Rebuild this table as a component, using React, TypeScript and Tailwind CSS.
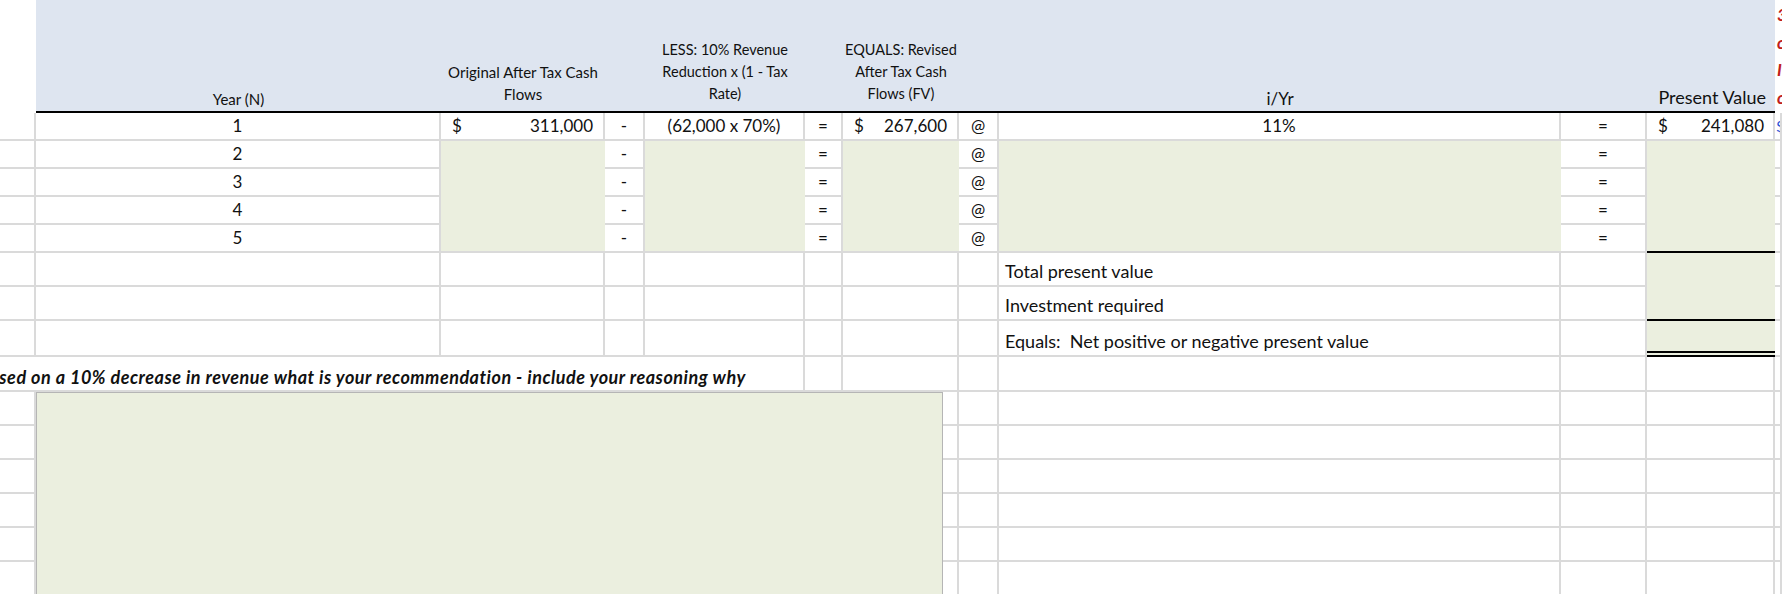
import React from 'react';

// spreadsheet gridline + fills
const gl = 'border-r-2 border-b-2 border-[#dadada]';
const head = 'bg-[#dee5f0] border-b-2 border-black';
const fill = 'bg-[#ebefdf]';
const fillLast = 'bg-[#ebefdf] border-b-2 border-[#dadada]';

const rows = [2, 3, 4, 5];

const App: React.FC = () => {
  return (
    <div className="w-[1782px] h-[594px] overflow-hidden bg-white text-[#111] font-[Lato,sans-serif]">
      <div className="grid grid-cols-[36px_405px_164px_40px_160px_38px_116px_40px_562px_86px_128px_7px] grid-rows-[113px_28px_28px_28px_28px_28px_34px_34px_36px_35px_34px_34px_34px_34px_34px_34px] whitespace-nowrap">
        {/* header */}
        <div />
        <div className={`${head} flex items-end justify-center pb-[1px] text-[15px] leading-[22px]`}>Year (N)</div>
        <div className={`${head} flex flex-col items-center justify-end pb-[6px] text-[15px] leading-[22px]`}>
          <span>Original After Tax Cash</span>
          <span>Flows</span>
        </div>
        <div className={head} />
        <div className={`${head} flex flex-col items-center justify-end pb-[6px] text-[14.5px] leading-[22px]`}>
          <span>LESS: 10% Revenue</span>
          <span>Reduction x (1 - Tax</span>
          <span>Rate)</span>
        </div>
        <div className={head} />
        <div className={`${head} flex flex-col items-center justify-end pb-[6px] text-[14.5px] leading-[22px]`}>
          <span>EQUALS: Revised</span>
          <span>After Tax Cash</span>
          <span>Flows (FV)</span>
        </div>
        <div className={head} />
        <div className={`${head} flex items-end justify-center pb-[1px] text-[17px] leading-[22px]`}>i/Yr</div>
        <div className={head} />
        <div className={`${head} flex items-end justify-end pr-[9px] pb-[3px] text-[18px] leading-[22px]`}>Present Value</div>
        <div className="flex flex-col overflow-hidden pl-[2px] pt-[1px] text-[17px] leading-[27.5px] font-bold italic text-[#c0201a]">
          <span>3.</span>
          <span>c</span>
          <span>I</span>
          <span>c</span>
        </div>

        {/* year 1 */}
        <div className={gl} />
        <div className={`${gl} flex items-center justify-center text-[17px]`}>1</div>
        <div className={`${gl} flex items-center justify-between pl-[11px] pr-[10px] text-[17px]`}>
          <span>$</span>
          <span>311,000</span>
        </div>
        <div className={`${gl} flex items-center justify-center text-[17px]`}>-</div>
        <div className={`${gl} flex items-center justify-center text-[17px]`}>(62,000 x 70%)</div>
        <div className={`${gl} flex items-center justify-center text-[17px]`}>=</div>
        <div className={`${gl} flex items-center justify-between pl-[11px] pr-[10px] text-[17px]`}>
          <span>$</span>
          <span>267,600</span>
        </div>
        <div className={`${gl} flex items-center justify-center text-[17px]`}>@</div>
        <div className={`${gl} flex items-center justify-center text-[17px]`}>11%</div>
        <div className={`${gl} flex items-center justify-center text-[17px]`}>=</div>
        <div className={`${gl} flex items-center justify-between pl-[11px] pr-[9px] text-[17px]`}>
          <span>$</span>
          <span>241,080</span>
        </div>
        <div className={`${gl} flex items-center overflow-hidden pl-[1px] text-[16px] text-[#2a4fd6]`}>$</div>

        {/* years 2-5 */}
        {rows.map((n) => (
          <React.Fragment key={n}>
            <div className={gl} />
            <div className={`${gl} flex items-center justify-center text-[17px]`}>{n}</div>
            <div className={n === 5 ? fillLast : fill} />
            <div className={`${gl} flex items-center justify-center text-[17px]`}>-</div>
            <div className={n === 5 ? fillLast : fill} />
            <div className={`${gl} flex items-center justify-center text-[17px]`}>=</div>
            <div className={n === 5 ? fillLast : fill} />
            <div className={`${gl} flex items-center justify-center text-[17px]`}>@</div>
            <div className={n === 5 ? fillLast : fill} />
            <div className={`${gl} flex items-center justify-center text-[17px]`}>=</div>
            <div className={n === 5 ? 'bg-[#ebefdf] border-b-2 border-black' : fill} />
            <div className={gl} />
          </React.Fragment>
        ))}

        {/* totals */}
        {['Total present value', 'Investment required', 'Equals:  Net positive or negative present value'].map((label, i) => (
          <React.Fragment key={label}>
            <div className={gl} />
            <div className={gl} />
            <div className={gl} />
            <div className={gl} />
            <div className={gl} />
            <div className={gl} />
            <div className={gl} />
            <div className={gl} />
            <div className={`${gl} flex items-end pl-[6px] pb-[4px] text-[18px] leading-[20px] whitespace-pre`}>{label}</div>
            <div className={gl} />
            <div
              className={
                i === 0
                  ? 'bg-[#ebefdf]'
                  : i === 1
                  ? 'bg-[#ebefdf] border-b-2 border-black'
                  : 'bg-[#ebefdf] border-b-[6px] border-double border-black'
              }
            />
            <div className={gl} />
          </React.Fragment>
        ))}

        {/* question row */}
        <div className={`${gl} col-span-5 flex items-end pb-[3px] overflow-hidden`}>
          <span className="ml-[-22px] text-[18px] leading-[20px] tracking-[0.5px] font-bold italic">
            Based on a 10% decrease in revenue what is your recommendation - include your reasoning why
          </span>
        </div>
        <div className={gl} />
        <div className={gl} />
        <div className={gl} />
        <div className={gl} />
        <div className={gl} />
        <div className={gl} />
        <div className={gl} />

        {/* answer area rows */}
        {[0, 1, 2, 3, 4, 5].map((r) => (
          <React.Fragment key={r}>
            <div className={gl} />
            <div className={gl} />
            <div className={gl} />
            <div className={gl} />
            <div className={gl} />
            <div className={gl} />
          </React.Fragment>
        ))}

        <div className="col-start-2 col-span-6 row-start-11 row-span-6 flex">
          <div className="flex-1 bg-[#ebefdf] border-l border-t border-r border-[#b5b5b5]" />
          <div className="w-[16px] flex flex-col">
            {[0, 1, 2, 3, 4, 5].map((r) => (
              <div key={r} className={`${gl} h-[34px] shrink-0`} />
            ))}
          </div>
        </div>
      </div>
    </div>
  );
};

export default App;
